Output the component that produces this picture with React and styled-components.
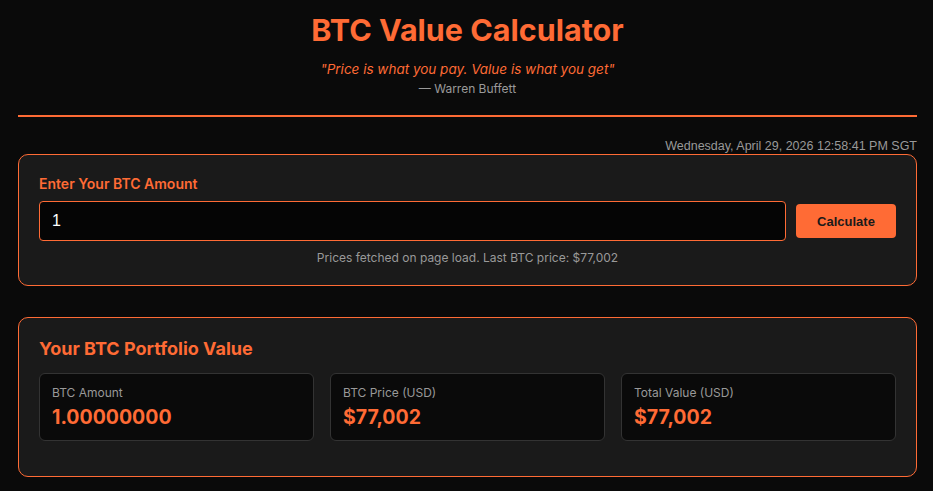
import React, { useState } from 'react';
import styled, { createGlobalStyle } from 'styled-components';

const GlobalStyle = createGlobalStyle`
  * { box-sizing: border-box; }
  body {
    margin: 0;
    background: #0a0a0a;
    color: #e0e0e0;
    font-family: Inter, "Noto Sans", sans-serif;
  }
`;

const Page = styled.div`
  padding: 12px 16px 20px 18px;
`;

const Header = styled.header`
  text-align: center;
  padding-bottom: 18px;
  border-bottom: 2px solid #ff6b35;
`;

const Title = styled.h1`
  margin: 0;
  font-size: 30.5px;
  line-height: 36px;
  font-weight: 700;
  color: #ff6b35;
`;

const Quote = styled.p`
  margin: 12px 0 0;
  font-size: 13.5px;
  line-height: 18px;
  font-style: italic;
  color: #ff6b35;
`;

const Author = styled.p`
  margin: 3px 0 0;
  font-size: 12px;
  line-height: 16px;
  color: #9a9a9a;
`;

const Timestamp = styled.div`
  text-align: right;
  margin-top: 22px;
  font-family: "Liberation Sans", Arial, sans-serif;
  font-size: 12.5px;
  line-height: 14px;
  color: #999;
`;

const Card = styled.section`
  background: #1a1a1a;
  border: 1px solid #ff6b35;
  border-radius: 10px;
  padding: 20px;
  margin-top: ${({ $gap }) => $gap}px;
`;

const Label = styled.label`
  display: block;
  font-size: 14px;
  line-height: 18px;
  font-weight: 600;
  color: #ff6b35;
  margin-bottom: 8px;
`;

const InputRow = styled.div`
  display: flex;
  align-items: center;
  gap: 10px;
`;

const AmountInput = styled.input`
  flex: 1;
  height: 40px;
  padding: 0 12px;
  background: #050505;
  border: 1px solid #ff6b35;
  border-radius: 4px;
  color: #fff;
  font-family: "Liberation Sans", Arial, sans-serif;
  font-size: 16px;
  outline: none;
`;

const CalcButton = styled.button`
  width: 100px;
  height: 34px;
  border: none;
  border-radius: 4px;
  background: #ff6b35;
  color: #1a1a1a;
  font-family: "Liberation Sans", Arial, sans-serif;
  font-weight: 700;
  font-size: 13px;
  cursor: pointer;
`;

const Note = styled.p`
  margin: 10px 0 0;
  text-align: center;
  font-size: 12px;
  line-height: 14px;
  color: #999;
`;

const SectionTitle = styled.h2`
  margin: 0 0 13px;
  font-size: 18px;
  line-height: 22px;
  font-weight: 700;
  color: #ff6b35;
`;

const StatGrid = styled.div`
  display: grid;
  grid-template-columns: repeat(3, 1fr);
  gap: 16px;
  margin-bottom: 15px;
`;

const Stat = styled.div`
  background: #0a0a0a;
  border: 1px solid #333;
  border-radius: 6px;
  padding: 11px 12px 11px;
`;

const StatLabel = styled.div`
  font-size: 12px;
  line-height: 16px;
  color: #999;
`;

const StatValue = styled.div`
  margin-top: 4px;
  font-size: 19.5px;
  line-height: 24px;
  font-weight: 700;
  color: #ff6b35;
`;

const BTC_PRICE = 77002;

export default function App() {
  const [amount, setAmount] = useState('1');
  const [btc, setBtc] = useState(1);

  const usd = (n) => '$' + Math.round(n).toLocaleString('en-US');

  return (
    <>
      <GlobalStyle />
      <Page>
        <Header>
          <Title>BTC Value Calculator</Title>
          <Quote>"Price is what you pay. Value is what you get"</Quote>
          <Author>— Warren Buffett</Author>
        </Header>
        <Timestamp>Wednesday, April 29, 2026 12:58:41 PM SGT</Timestamp>

        <Card $gap={1}>
          <Label htmlFor="btc">Enter Your BTC Amount</Label>
          <InputRow>
            <AmountInput id="btc" value={amount} onChange={(e) => setAmount(e.target.value)} />
            <CalcButton onClick={() => setBtc(parseFloat(amount) || 0)}>Calculate</CalcButton>
          </InputRow>
          <Note>Prices fetched on page load. Last BTC price: {usd(BTC_PRICE)}</Note>
        </Card>

        <Card $gap={31}>
          <SectionTitle>Your BTC Portfolio Value</SectionTitle>
          <StatGrid>
            <Stat>
              <StatLabel>BTC Amount</StatLabel>
              <StatValue>{btc.toFixed(8)}</StatValue>
            </Stat>
            <Stat>
              <StatLabel>BTC Price (USD)</StatLabel>
              <StatValue>{usd(BTC_PRICE)}</StatValue>
            </Stat>
            <Stat>
              <StatLabel>Total Value (USD)</StatLabel>
              <StatValue>{usd(btc * BTC_PRICE)}</StatValue>
            </Stat>
          </StatGrid>
        </Card>
      </Page>
    </>
  );
}
